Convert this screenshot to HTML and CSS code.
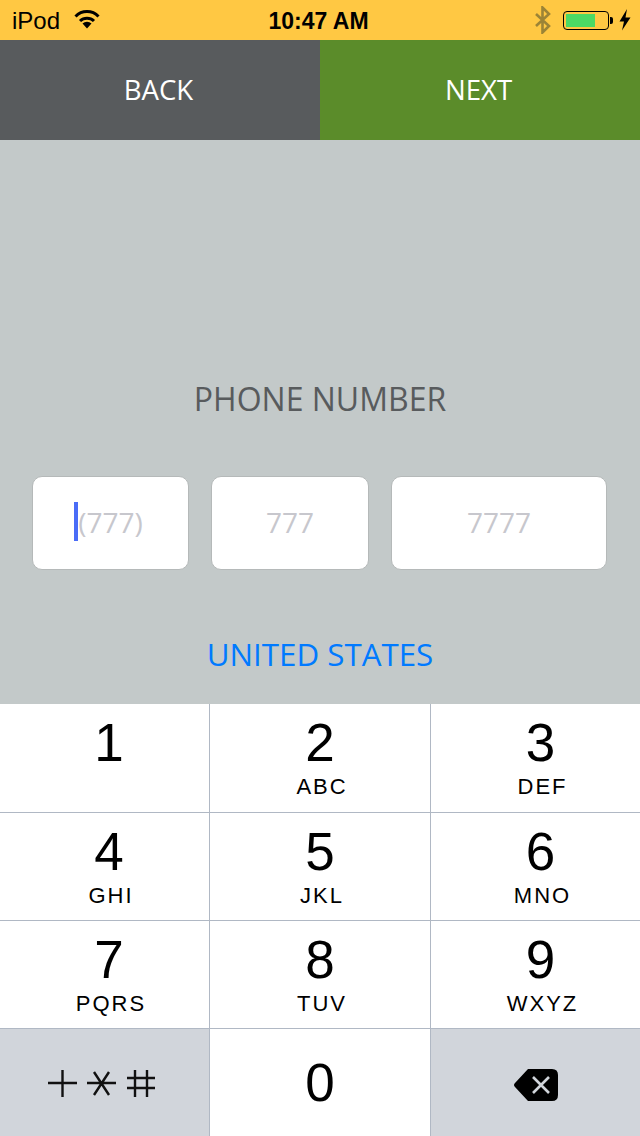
FILE: index.html
```html
<!DOCTYPE html>
<html>
<head>
    <title>Phone Number</title>
    <link rel="stylesheet" href="styles.css">
</head>
<body>
    <div class="status-bar">
        <div class="status-left">
            <span class="carrier">iPod</span>
            <svg class="wifi" width="26" height="20" viewBox="0 0 26 20">
                <path d="M1.5 7.5 A16 16 0 0 1 24.5 7.5" fill="none" stroke="#000" stroke-width="3"/>
                <path d="M6 12 A10 10 0 0 1 20 12" fill="none" stroke="#000" stroke-width="3"/>
                <path d="M8.5 14.5 A6.5 6.5 0 0 1 17.5 14.5 L13 19.5 Z" fill="#000"/>
            </svg>
        </div>
        <div class="status-time">10:47 AM</div>
        <div class="status-right">
            <svg class="bluetooth" width="18" height="28" viewBox="0 0 18 28">
                <path d="M2 8 L15 20 L8.5 26.5 V1.5 L15 8 L2 20" fill="none" stroke="#9c8436" stroke-width="2.6"/>
            </svg>
            <div class="battery"><div class="battery-level"></div></div>
            <div class="battery-nub"></div>
            <svg class="bolt" width="12" height="22" viewBox="0 0 12 22">
                <path d="M8 0 L0.5 12.5 H5 L3 21.5 L11.5 8.5 H6.5 Z" fill="#000"/>
            </svg>
        </div>
    </div>

    <div class="nav">
        <div class="nav-btn back">BACK</div>
        <div class="nav-btn next">NEXT</div>
    </div>

    <div class="main">
        <div class="phone-label">PHONE NUMBER</div>
        <div class="fields">
            <div class="field field-active"><span class="caret"></span>(777)</div>
            <div class="field">777</div>
            <div class="field">7777</div>
        </div>
        <div class="country">UNITED STATES</div>
    </div>

    <div class="keypad">
        <div class="key"><span class="digit">1</span></div>
        <div class="key"><span class="digit">2</span><span class="letters">ABC</span></div>
        <div class="key"><span class="digit">3</span><span class="letters">DEF</span></div>
        <div class="key"><span class="digit">4</span><span class="letters">GHI</span></div>
        <div class="key"><span class="digit">5</span><span class="letters">JKL</span></div>
        <div class="key"><span class="digit">6</span><span class="letters">MNO</span></div>
        <div class="key"><span class="digit">7</span><span class="letters">PQRS</span></div>
        <div class="key"><span class="digit">8</span><span class="letters">TUV</span></div>
        <div class="key"><span class="digit">9</span><span class="letters">WXYZ</span></div>
        <div class="key key-dark key-icon">
            <svg class="symbols" width="108" height="30" viewBox="0 0 108 30" fill="none" stroke="#111" stroke-width="2.4">
                <path d="M0 14 H29 M14.5 1 V28"/>
                <path d="M39 14 H68 M46 3 L61 26 M61 3 L46 26"/>
                <path d="M79 9 H107 M79 19 H107 M87 1 V28 M99 1 V28"/>
            </svg>
        </div>
        <div class="key key-icon"><span class="digit zero">0</span></div>
        <div class="key key-dark key-icon">
            <svg class="delete" width="44" height="32" viewBox="0 0 44 32">
                <path d="M14 0 H38 Q44 0 44 6 V26 Q44 32 38 32 H14 L1 18 Q-1 16 1 14 Z" fill="#000"/>
                <path d="M19 8 L35 24 M35 8 L19 24" fill="none" stroke="#d1d5db" stroke-width="2.6"/>
            </svg>
        </div>
    </div>
</body>
</html>
```

FILE: styles.css
```css
* {
    margin: 0;
    padding: 0;
    box-sizing: border-box;
}

body {
    width: 640px;
    height: 1136px;
    overflow: hidden;
    display: flex;
    flex-direction: column;
    font-family: "Open Sans", sans-serif;
    background: #c3c9c9;
}

.status-bar {
    height: 40px;
    padding: 2px 9px 0 12px;
    display: grid;
    grid-template-columns: 1fr auto 1fr;
    align-items: center;
    background: #ffc843;
    color: #000;
    font-family: "Liberation Sans", sans-serif;
}

.status-left {
    display: flex;
    align-items: center;
    gap: 14px;
}

.carrier {
    font-size: 24px;
}

.wifi {
    margin-top: -4px;
}

.status-time {
    font-size: 23px;
    font-weight: bold;
    margin-right: 6px;
}

.status-right {
    display: flex;
    align-items: center;
    justify-content: flex-end;
    margin-top: -2px;
}

.bluetooth {
    margin-right: 11px;
}

.battery {
    width: 46px;
    height: 19px;
    padding: 2px;
    border: 1.5px solid #000;
    border-radius: 4px;
}

.battery-level {
    width: 29px;
    height: 100%;
    background: #4cd964;
}

.battery-nub {
    width: 3px;
    height: 7px;
    margin-left: 1px;
    background: #000;
    border-radius: 0 2px 2px 0;
}

.bolt {
    margin-left: 6px;
}

.nav {
    height: 100px;
    display: grid;
    grid-template-columns: 320px 320px;
}

.nav-btn {
    display: flex;
    align-items: center;
    justify-content: center;
    color: #fff;
    font-size: 27.6px;
    padding: 0 3px 2px 0;
}

.back {
    background: #585b5d;
}

.next {
    background: #5b8c2a;
}

.main {
    height: 564px;
    padding-top: 236px;
    display: flex;
    flex-direction: column;
    align-items: center;
}

.phone-label {
    height: 46px;
    line-height: 46px;
    font-size: 32px;
    color: #585b5d;
}

.fields {
    width: 100%;
    margin-top: 54px;
    padding-left: 32px;
    display: grid;
    grid-template-columns: 157px 158px 216px;
    gap: 22px;
}

.field {
    height: 94px;
    padding-bottom: 2px;
    display: flex;
    align-items: center;
    justify-content: center;
    background: #fff;
    border: 1px solid #b5b9b9;
    border-radius: 10px;
    font-size: 28px;
    color: #c7c7cd;
}

.field-active {
    padding-right: 4px;
}

.caret {
    width: 4px;
    height: 39px;
    margin-bottom: 2px;
    background: #4a6cf7;
}

.country {
    margin-top: 61px;
    height: 46px;
    line-height: 46px;
    font-size: 31.3px;
    color: #007aff;
}

.keypad {
    height: 432px;
    display: grid;
    grid-template-columns: 210px 221px 209px;
    grid-template-rows: 109px 108px 108px 107px;
    background: #fff;
    font-family: "Liberation Sans", sans-serif;
    color: #000;
}

.key {
    display: flex;
    flex-direction: column;
    align-items: center;
    border-right: 1px solid #b0b8c4;
    border-bottom: 1px solid #b0b8c4;
}

.key:nth-child(3n+1) {
    padding-left: 9px;
}

.key:nth-child(3n) {
    padding-left: 10px;
    border-right: none;
}

.key:nth-child(n+10) {
    padding-left: 0;
    border-bottom: none;
}

.key-icon {
    justify-content: center;
}

.key-dark {
    background: #d1d5db;
}

.symbols {
    margin: 3px 5px 0 0;
}

.delete {
    margin-top: 4px;
}

.digit {
    font-size: 53px;
    line-height: 60px;
    margin-top: 9px;
}

.zero {
    margin-top: 0;
}

.letters {
    font-size: 22px;
    line-height: 26px;
    letter-spacing: 2px;
    margin: 1px 0 0 4px;
}
```
